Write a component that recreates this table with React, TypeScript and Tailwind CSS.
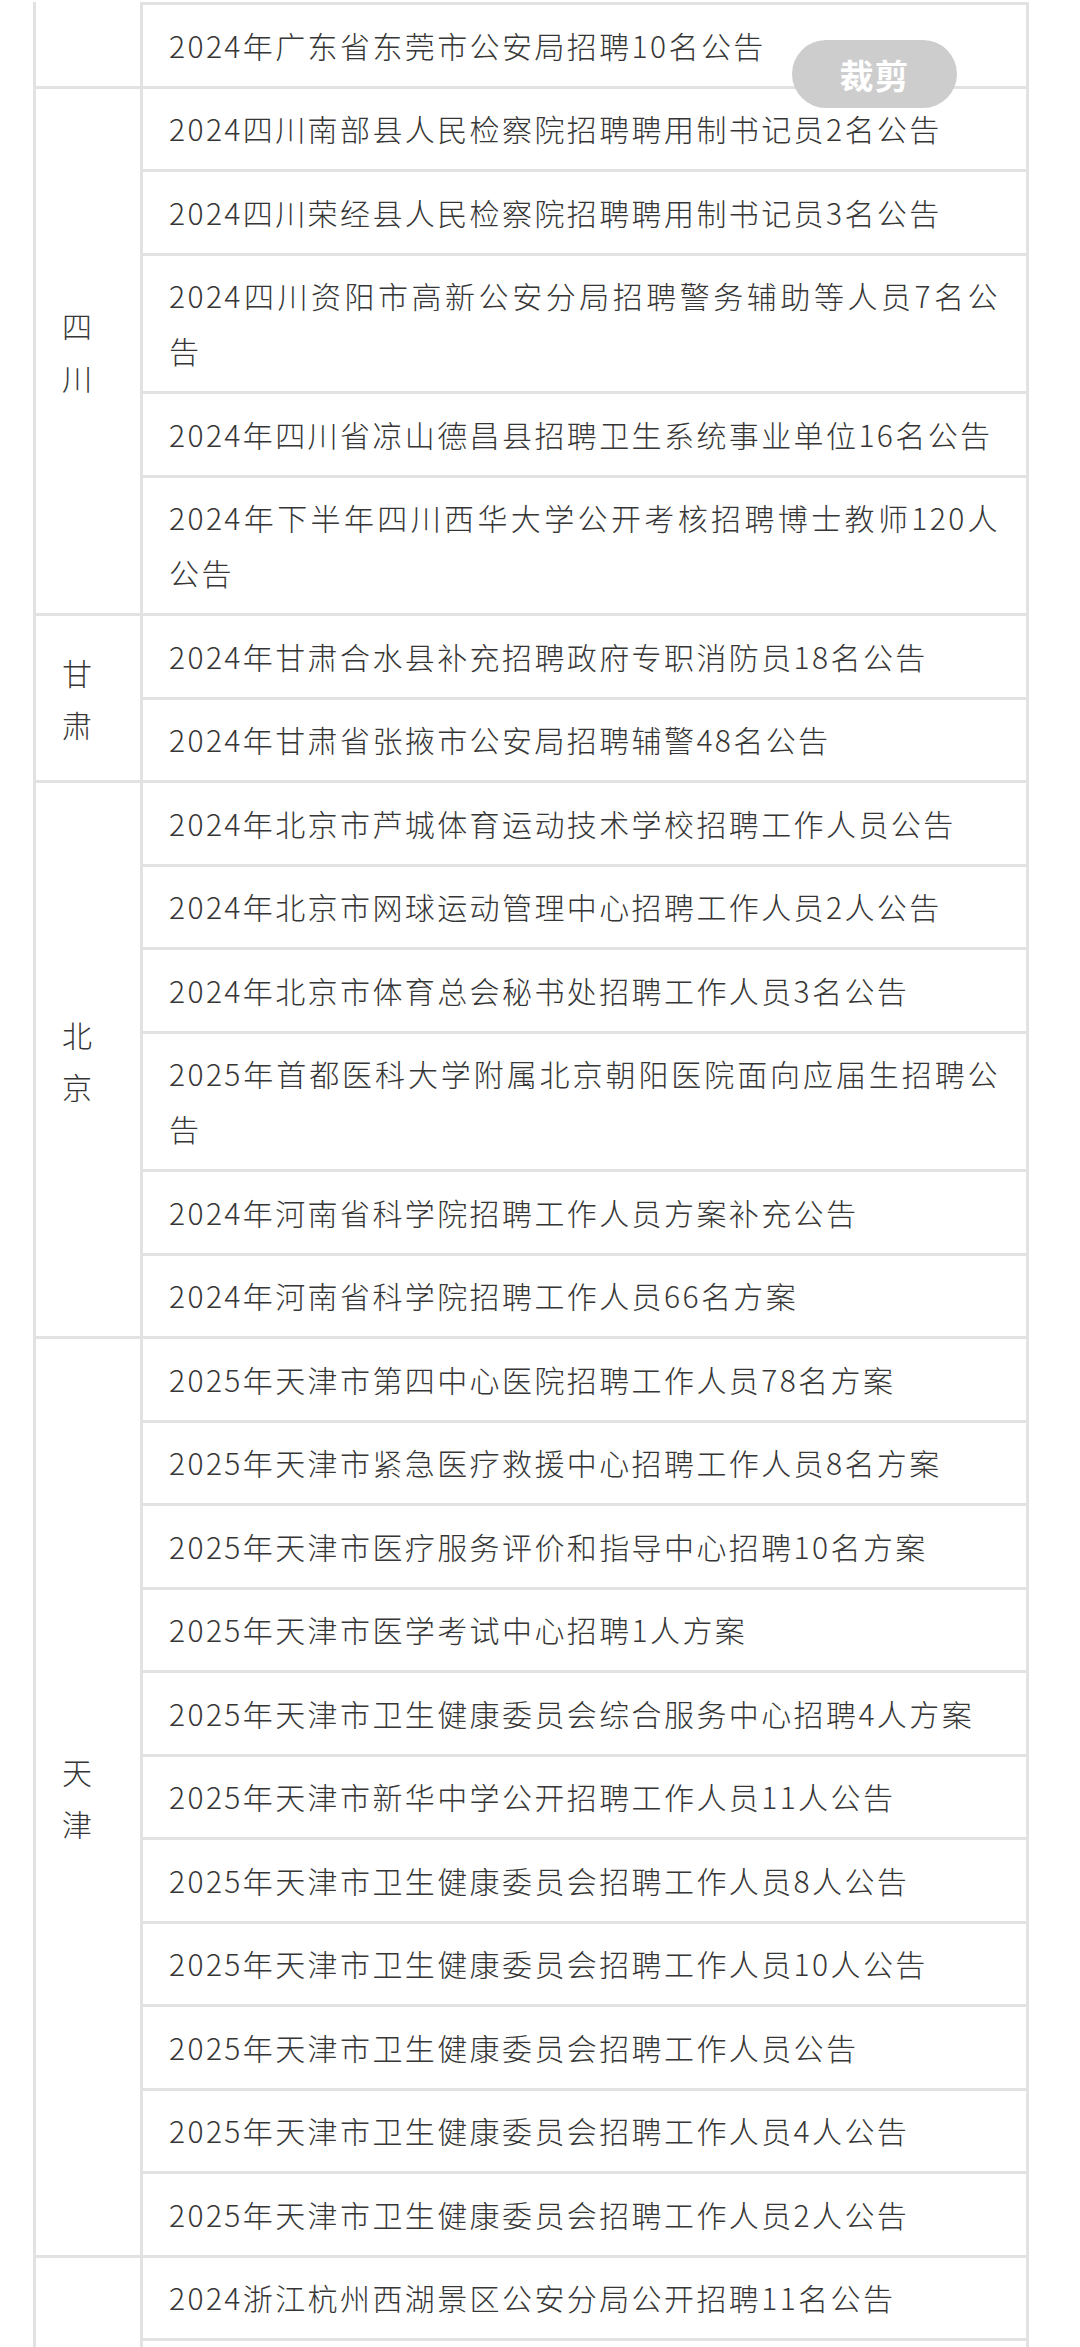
import React from 'react';

type Group = { name: string; rows: string[]; continued?: boolean };

const groups: Group[] = [
  { name: '', continued: true, rows: ['2024年广东省东莞市公安局招聘10名公告'] },
  {
    name: '四川',
    rows: [
      '2024四川南部县人民检察院招聘聘用制书记员2名公告',
      '2024四川荣经县人民检察院招聘聘用制书记员3名公告',
      '2024四川资阳市高新公安分局招聘警务辅助等人员7名公告',
      '2024年四川省凉山德昌县招聘卫生系统事业单位16名公告',
      '2024年下半年四川西华大学公开考核招聘博士教师120人公告',
    ],
  },
  {
    name: '甘肃',
    rows: ['2024年甘肃合水县补充招聘政府专职消防员18名公告', '2024年甘肃省张掖市公安局招聘辅警48名公告'],
  },
  {
    name: '北京',
    rows: [
      '2024年北京市芦城体育运动技术学校招聘工作人员公告',
      '2024年北京市网球运动管理中心招聘工作人员2人公告',
      '2024年北京市体育总会秘书处招聘工作人员3名公告',
      '2025年首都医科大学附属北京朝阳医院面向应届生招聘公告',
      '2024年河南省科学院招聘工作人员方案补充公告',
      '2024年河南省科学院招聘工作人员66名方案',
    ],
  },
  {
    name: '天津',
    rows: [
      '2025年天津市第四中心医院招聘工作人员78名方案',
      '2025年天津市紧急医疗救援中心招聘工作人员8名方案',
      '2025年天津市医疗服务评价和指导中心招聘10名方案',
      '2025年天津市医学考试中心招聘1人方案',
      '2025年天津市卫生健康委员会综合服务中心招聘4人方案',
      '2025年天津市新华中学公开招聘工作人员11人公告',
      '2025年天津市卫生健康委员会招聘工作人员8人公告',
      '2025年天津市卫生健康委员会招聘工作人员10人公告',
      '2025年天津市卫生健康委员会招聘工作人员公告',
      '2025年天津市卫生健康委员会招聘工作人员4人公告',
      '2025年天津市卫生健康委员会招聘工作人员2人公告',
    ],
  },
  {
    // only the first row is on screen, the rest runs off the bottom
    name: '浙江',
    rows: [
      '2024浙江杭州西湖景区公安分局公开招聘11名公告',
      '2024浙江省杭州市公安局招聘警务辅助人员公告',
      '2024浙江宁波市公安局招聘辅警公告',
      '2024浙江温州市人民检察院招聘公告',
    ],
  },
];

const font = { fontFamily: '"Noto Sans CJK SC", "Noto Sans", sans-serif' };

export default function App() {
  return (
    <div className="relative h-[2347px] overflow-hidden bg-white" style={font}>
      <table className="mt-[2px] ml-[33px] w-[996px] table-fixed border-separate border-spacing-0 border-r-[3px] border-[#e2e2e2] text-[30px] font-light tracking-[2.4px] text-[#363636]">
        <colgroup>
          <col className="w-[107px]" />
          <col />
        </colgroup>
        <tbody>
          {groups.map((g) =>
            g.rows.map((title, i) => (
              <tr key={title}>
                {i === 0 && (
                  <td
                    rowSpan={g.rows.length}
                    className={`border-l-[3px] border-[#e2e2e2] px-[26px] align-middle leading-[52px] ${
                      g.continued ? '' : 'border-t-[3px]'
                    }`}
                  >
                    {g.name}
                  </td>
                )}
                <td className="border-l-[3px] border-t-[3px] border-[#e2e2e2] px-[26px] pt-[12.5px] pb-[13px] text-justify leading-[55px]">
                  {title}
                </td>
              </tr>
            ))
          )}
        </tbody>
      </table>

      {/* floating crop button */}
      <div className="absolute left-[792px] top-[40px] flex h-[68px] w-[165px] items-center justify-center rounded-full bg-[#cdcdcd] text-[34px] font-bold tracking-[1px] text-white">
        裁剪
      </div>
    </div>
  );
}
